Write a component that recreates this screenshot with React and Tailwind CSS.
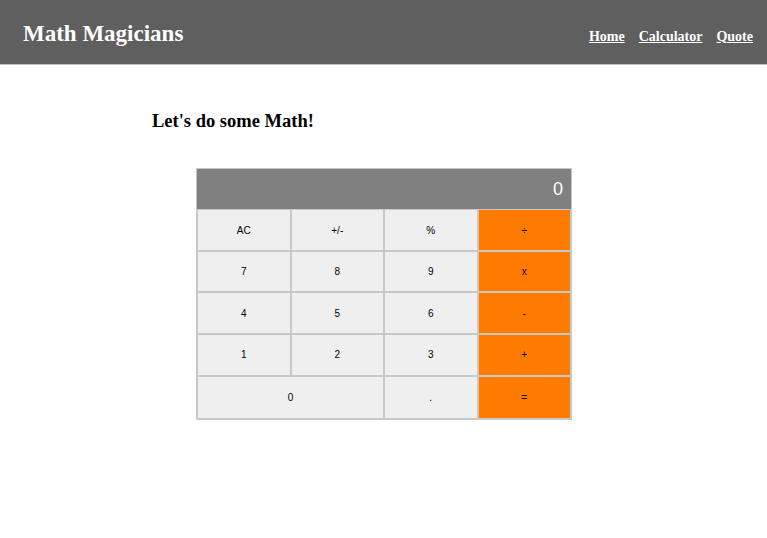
import React from "react";

const keys = [
  ["AC", "+/-", "%", "÷"],
  ["7", "8", "9", "x"],
  ["4", "5", "6", "-"],
  ["1", "2", "3", "+"],
];

function Key({ label, orange, wide, last }) {
  return (
    <button
      className={
        "flex items-center justify-center border border-[#c8c8c8] text-[10px] text-black " +
        (orange ? "bg-[#ff7b00] " : "bg-[#efefef] ") +
        (wide ? "col-span-2 " : "") +
        (last ? "h-[43.5px]" : "h-[41.6px]")
      }
      style={{ fontFamily: "Arial, 'Liberation Sans', sans-serif" }}
    >
      {label}
    </button>
  );
}

function Calculator() {
  return (
    <div className="ml-[196px] mt-[32px] w-[376px] border border-[#c8c8c8]">
      <div className="flex h-[40.5px] items-center justify-end bg-[#808080] px-2 text-[18px] text-white"
        style={{ fontFamily: "Arial, 'Liberation Sans', sans-serif" }}>
        0
      </div>
      <div className="grid grid-cols-4">
        {keys.map((row) =>
          row.map((k, i) => <Key key={k} label={k} orange={i === 3} />)
        )}
        <Key label="0" wide last />
        <Key label="." last />
        <Key label="=" orange last />
      </div>
    </div>
  );
}

export default function App() {
  return (
    <div className="min-h-[538px] bg-white" style={{ fontFamily: "'Liberation Serif', serif" }}>
      <header className="flex h-[65px] items-center justify-between border-b border-[#c4c4c4] bg-[#5f5f5f] pl-[23px] pr-[14px]">
        <h1 className="mt-1 text-[23px] font-bold text-white">Math Magicians</h1>
        <nav className="mt-2 flex gap-[14px] text-[14px] font-bold text-white">
          <a href="#" className="underline">Home</a>
          <a href="#" className="underline">Calculator</a>
          <a href="#" className="underline">Quote</a>
        </nav>
      </header>
      <h2 className="ml-[152px] mt-[43px] text-[18.5px] font-bold text-black">Let's do some Math!</h2>
      <Calculator />
    </div>
  );
}
